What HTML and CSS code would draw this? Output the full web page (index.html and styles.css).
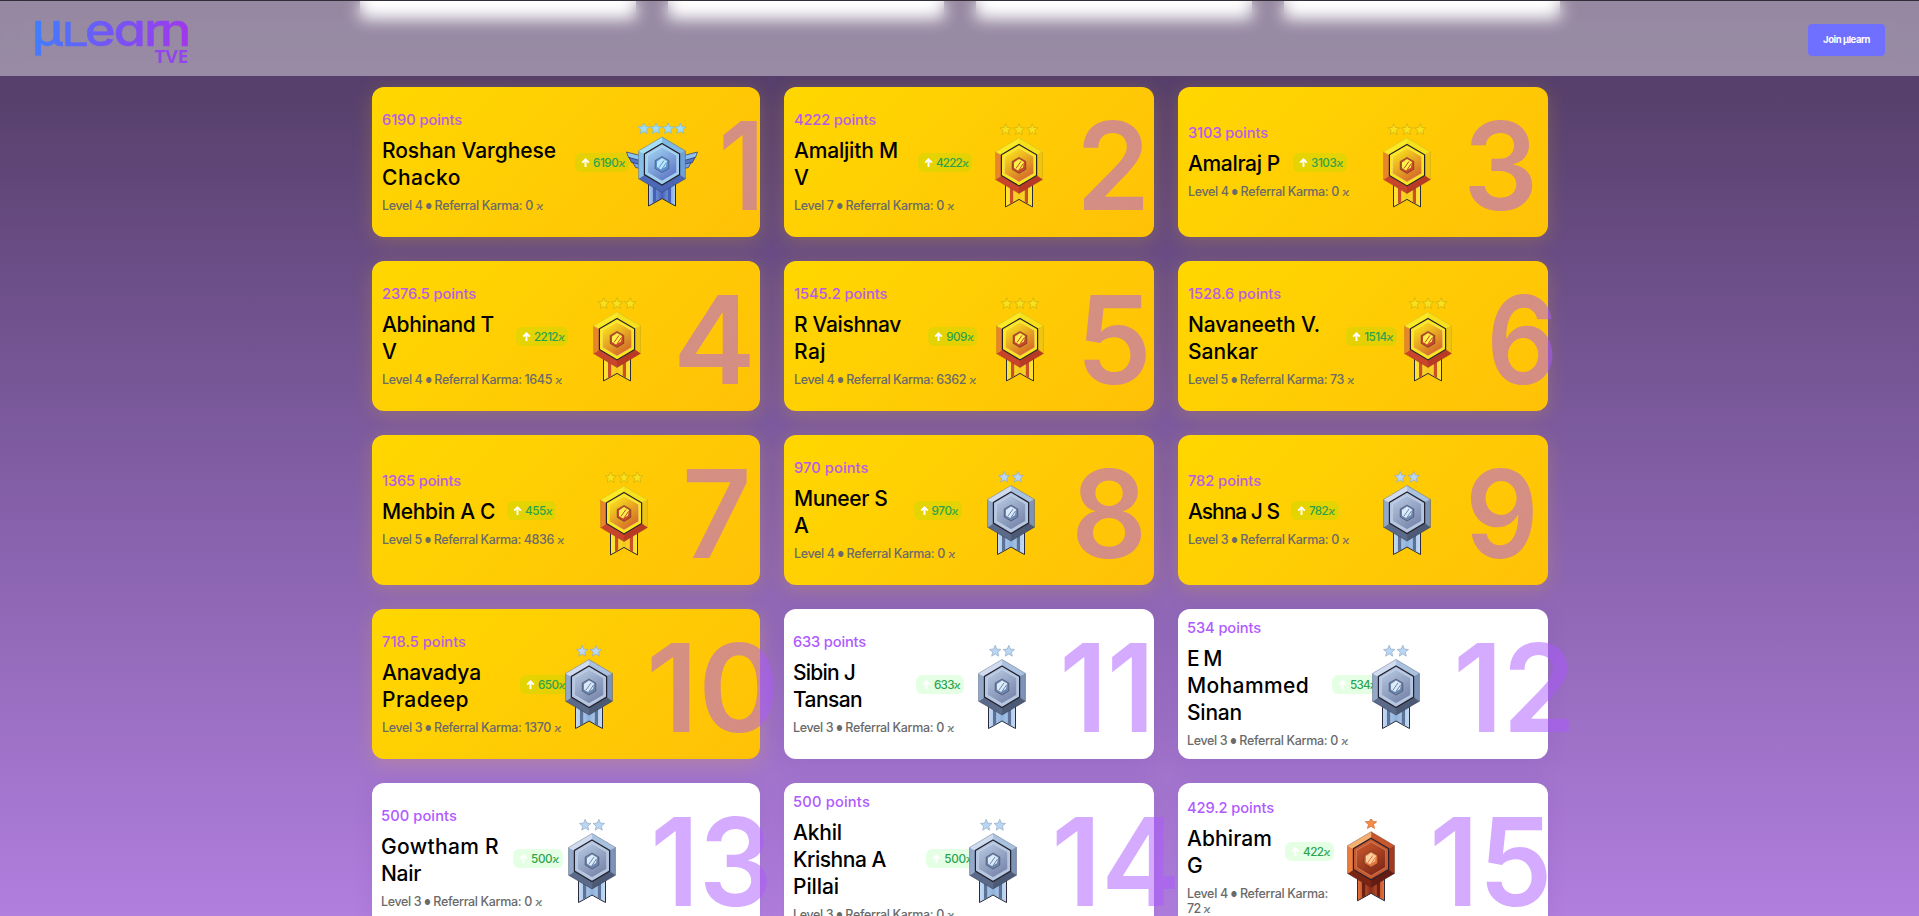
FILE: index.html
```
<!DOCTYPE html>
<html lang="en">
<head>
<meta charset="utf-8">
<title>µLearn TVE</title>
<link rel="stylesheet" href="styles.css">
</head>
<body>
<header class="nav">
  <svg class="logo" width="170" height="56" viewBox="24 14 170 56">
    <defs>
      <linearGradient id="logo" gradientUnits="userSpaceOnUse" x1="30" y1="20" x2="161" y2="50">
        <stop offset="0" stop-color="#3d80ff"/><stop offset=".45" stop-color="#6f58f6"/><stop offset="1" stop-color="#a436ea"/>
      </linearGradient>
    </defs>
    <text class="logo-word" transform="scale(1.17 1)" x="27 52 72.500 97 123 136.500" y="45.500">µʟeɑrn</text>
    <text class="logo-sub" x="154.500" y="61.500" textLength="34" lengthAdjust="spacingAndGlyphs">TVE</text>
  </svg>
  <a class="join">Join µlearn</a>
</header>
<main class="page">
  <section class="stats"><div></div><div></div><div></div><div></div></section>
  <section class="board" id="board"></section>
</main>
<script src="script.js"></script>
</body>
</html>
```
FILE: styles.css
```
* { box-sizing: border-box; }
body {
  margin: 0;
  height: 916px;
  overflow: hidden;
  font-family: Inter, "Noto Sans", "DejaVu Sans", sans-serif;
  background: linear-gradient(180deg, #503962 0%, #57406c 10%, #8560a9 55%, #b17fde 100%);
}
.nav {
  position: fixed;
  inset: 0 0 auto 0;
  z-index: 5;
  height: 76px;
  padding: 0 34px 0 24px;
  display: flex;
  align-items: center;
  justify-content: space-between;
  border-top: 1px solid #332d38;
  background: rgba(255, 255, 255, .4);
  backdrop-filter: blur(8px);
}
.logo { display: block; margin-top: 8px; overflow: visible; }
.logo-word {
  font-family: Inter, "DejaVu Sans", sans-serif;
  font-size: 45px;
  font-weight: 500;
  fill: url(#logo);
  stroke: url(#logo);
  stroke-width: .4;
  stroke-linejoin: round;
}
.logo-sub { font: 700 18px "Open Sans", sans-serif; fill: #9146ea; }
.join {
  width: 77px;
  height: 32px;
  margin-top: 2px;
  border-radius: 4px;
  background: #6f70ff;
  color: #fff;
  font-size: 9.5px;
  font-weight: 700;
  letter-spacing: -.45px;
  line-height: 32px;
  text-align: center;
}
.page { height: 916px; overflow: hidden; }
.stats {
  width: 1200px;
  margin: 0 auto;
  display: grid;
  grid-template-columns: repeat(4, 1fr);
  gap: 32px;
  height: 19px;
}
.stats div { background: #fff; }
.board {
  width: 1176px;
  margin: 68px 0 0 372px;
  display: grid;
  grid-template-columns: 388px 370px 370px;
  grid-auto-rows: 150px;
  gap: 24px;
}
.card {
  display: flex;
  align-items: center;
  border-radius: 12px;
  background: #fff;
  box-shadow: 0 4px 20px rgba(110, 60, 170, .14);
  white-space: nowrap;
  padding-left: 9px;
}
.card.gold {
  padding-left: 10px;
  background: linear-gradient(135deg, #ffd700, #ffc107);
  box-shadow: 0 4px 20px rgba(255, 193, 7, .2);
}
.card > * { flex: none; }
.info { display: flex; flex-direction: column; align-items: flex-start; }
.points { font-size: 14.7px; font-weight: 500; line-height: 19px; color: #b05aff; }
.gold .points { color: #b65bea; }
.names { margin: 7px 0 7px; display: flex; flex-direction: column; align-items: flex-start; }
.name { font-size: 21px; font-weight: 500; line-height: 27px; color: #000; }
.level { font-size: 12.5px; font-weight: 500; line-height: 15px; color: #6a6a6a; }
.dot { display: inline-block; font-size: 7px; line-height: 7px; transform: translateY(-1px); }
.k { font-family: "DejaVu Sans", sans-serif; font-size: .9em; }
.pill {
  height: 19px;
  margin-top: 1px;
  display: flex;
  align-items: center;
  gap: 3px;
  padding-left: 6px;
  border-radius: 6px;
  background: rgba(0, 255, 0, .1);
  color: #2ba34e;
  font-size: 11.7px;
  font-weight: 500;
}
.pill svg { flex: none; }
.award { margin-top: 7px; }
.medal { display: block; }
.rank {
  padding-top: 7px;
  font-size: 122px;
  font-weight: 600;
  line-height: 120px;
  color: rgba(171, 87, 255, .5);
  transform-origin: 0 50%;
}
```
FILE: script.js
```
// One row per member: points, name lines, level lines, gain, medal tier,
// then measured widths and offsets inside the card.
const members = [
  ['6190', 79, [['Roshan Varghese', 173], ['Chacko', 78]], [['Level 4 ● Referral Karma: 0', 160]], '6190', 203, 54, 'diamond', 289.7, 351.3, 385.3],
  ['4222', 81, [['Amaljith M', 103], ['V', 13]], [['Level 7 ● Referral Karma: 0', 159]], '4222', 134, 54, 'gold', 234.7, 298.7, 359],
  ['3103', 79, [['Amalraj P', 91]], [['Level 4 ● Referral Karma: 0', 160]], '3103', 115, 54, 'gold', 228.7, 290.7, 354.3],
  ['2376.5', 93, [['Abhinand T', 111], ['V', 13]], [['Level 4 ● Referral Karma: 1645', 179]], '2212', 144, 52.3, 'gold', 244.7, 306.8, 378],
  ['1545.2', 92.4, [['R Vaishnav', 106], ['Raj', 31]], [['Level 4 ● Referral Karma: 6362', 181]], '909', 144.2, 49.3, 'gold', 236.4, 300, 362],
  ['1528.6', 92, [['Navaneeth V.', 131], ['Sankar', 69]], [['Level 5 ● Referral Karma: 73', 165]], '1514', 168.2, 50.8, 'gold', 249.8, 314, 374.5],
  ['1365', 78, [['Mehbin A C', 112]], [['Level 5 ● Referral Karma: 4836', 181]], '455', 135, 49.3, 'gold', 252.3, 313.7, 375],
  ['970', 73.5, [['Muneer S', 92.5], ['A', 13.6]], [['Level 4 ● Referral Karma: 0', 160]], '970', 129.6, 48.5, 'silver', 227.3, 293, 357],
  ['782', 72, [['Ashna J S', 90]], [['Level 3 ● Referral Karma: 0', 160]], '782', 112.9, 47.7, 'silver', 228.8, 293, 355],
  ['718.5', 83, [['Anavadya', 98], ['Pradeep', 86]], [['Level 3 ● Referral Karma: 1370', 178]], '650', 148, 49, 'silver', 217.3, 279, 402.3],
  ['633', 72, [['Sibin J', 61], ['Tansan', 68]], [['Level 3 ● Referral Karma: 0', 160]], '633', 132, 48, 'silver', 218.3, 280.3, 363],
  ['534', 73, [['E M', 33.5], ['Mohammed', 121], ['Sinan', 54]], [['Level 3 ● Referral Karma: 0', 160]], '534', 154, 48, 'silver', 218.3, 279.7, 390.7],
  ['500', 75, [['Gowtham R', 117], ['Nair', 39]], [['Level 3 ● Referral Karma: 0', 160]], '500', 141, 50, 'silver', 220.3, 282.7, 395],
  ['500', 76, [['Akhil', 48], ['Krishna A', 92], ['Pillai', 45]], [['Level 3 ● Referral Karma: 0', 160]], '500', 142.3, 50, 'silver', 209.3, 271.7, 391],
  ['429.2', 86, [['Abhiram', 84], ['G', 16]], [['Level 4 ● Referral Karma:', 140], ['72', 22]], '422', 107, 49, 'bronze', 192.7, 255.7, 368.7]
];

const tiers = {
  diamond: { stars: 4, gap: 12.2, star: '#9fdcf8', edge: '#7fb4cc', f: ['#a5def5', '#7fb9e6', '#6fa0d8', '#4a66b4', '#4c69b8', '#86bfe8'], in1: '#9fd0f0', in2: '#5b74c4', gem: '#b9e6fa', gem2: '#5d8fd0', rib: ['#4560b8', '#a9d0f4'], stripe: '#4560b8', dy: -0.5 },
  gold: { stars: 3, gap: 13.3, star: '#f8e01c', edge: '#cfae10', f: ['#f9e926', '#f6e01c', '#f0c512', '#b93a24', '#c8442a', '#e8872a'], in1: '#fbe61c', in2: '#d2602a', gem: '#fdf04a', gem2: '#c9482a', rib: ['#f6c81c', '#fbe83a'], stripe: '#cc4f26', dy: 0.4 },
  silver: { stars: 2, gap: 13.6, star: '#b9d6f4', edge: '#93a9c4', f: ['#cfdcf0', '#a9c2e0', '#7d93b8', '#4c5a76', '#5a6a88', '#93a9ca'], in1: '#b4c6e0', in2: '#7482a8', gem: '#dcebfa', gem2: '#6d86ae', rib: ['#8fb2dc', '#c4dcf6'], stripe: '#5c7296', dy: 0 },
  bronze: { stars: 1, gap: 0, star: '#f58d48', edge: '#c8662e', f: ['#f5b070', '#c8552c', '#a43a20', '#641c12', '#7c2414', '#ec7c3c'], in1: '#c9582c', in2: '#7c2414', gem: '#ffd0a0', gem2: '#e2733c', rib: ['#8a2c18', '#e8743c'], stripe: '#6d2012', dy: -1.7 }
};

function hex(w, t, b) {
  const q = (b - t) / 4;
  return [[0, t], [w, t + q], [w, b - q], [0, b], [-w, b - q], [-w, t + q]];
}
const pts = a => a.map(p => p.join(',')).join(' ');

function star(cx, cy, r) {
  const a = [];
  for (let i = 0; i < 10; i++) {
    const k = i % 2 ? r * .45 : r, t = -Math.PI / 2 + i * Math.PI / 5;
    a.push([(cx + k * Math.cos(t)).toFixed(2), (cy + k * Math.sin(t)).toFixed(2)]);
  }
  return pts(a);
}

function medal(name, id) {
  const t = tiers[name];
  const out = hex(23.4, 50.5, 106), mid = hex(17.6, 57, 98.5), inn = hex(14.6, 60.5, 94.5), gem = hex(6.8, 70, 86);
  let s = `<svg class="medal" width="80" height="86" viewBox="-40 36 80 86"><defs>
    <linearGradient id="i${id}" x1=".2" y1="0" x2=".8" y2="1"><stop offset="0" stop-color="${t.in1}"/><stop offset="1" stop-color="${t.in2}"/></linearGradient>
    <linearGradient id="r${id}" x1="0" x2="1" y1="0" y2="0"><stop offset="0" stop-color="${t.rib[1]}"/><stop offset=".5" stop-color="${t.rib[0]}"/><stop offset="1" stop-color="${t.rib[1]}"/></linearGradient></defs><g transform="translate(0 ${t.dy})">`;
  for (let i = 0; i < t.stars; i++) {
    s += `<polygon points="${star((i - (t.stars - 1) / 2) * t.gap, 42.3, 6)}" fill="${t.star}" stroke="${t.edge}" stroke-width=".7"/>`;
  }
  if (name === 'diamond') {
    for (const k of [1, -1]) {
      s += `<g transform="scale(${k} 1)" stroke="#26356e" stroke-width=".7"><path d="M22 69 L35.500 65.500 L33.500 71 L22 75Z" fill="#8cc4ee"/><path d="M22 74 L33 71 L30.500 76 L22 79Z" fill="#5576c4"/><path d="M22 78 L29 76 L26.500 81 L22 82Z" fill="#7aa6e0"/></g>`;
    }
  }
  s += `<path d="M-13.500 96 V119.500 L-7 116 L0 112 L7 116 L13.500 119.500 V96Z" fill="url(#r${id})" stroke="#2c2a3a" stroke-width="1"/>
    <path d="M-9 98 V116.500 L-5.800 114.800 V98Z M9 98 V116.500 L5.800 114.800 V98Z" fill="${t.stripe}"/>`;
  for (let i = 0; i < 6; i++) {
    const j = (i + 1) % 6;
    const fill = [t.f[1], t.f[2], t.f[3], t.f[4], t.f[5], t.f[0]][i];
    s += `<polygon points="${pts([out[i], out[j], mid[j], mid[i]])}" fill="${fill}" stroke="${fill}" stroke-width=".4"/>`;
  }
  s += `<polygon points="${pts(out)}" fill="none" stroke="#24243a" stroke-opacity="${name === 'gold' ? .15 : .4}" stroke-width=".7"/>
    <polygon points="${pts(mid)}" fill="${t.in1}" stroke="#24202e" stroke-width="1.2"/>
    <polygon points="${pts(inn)}" fill="url(#i${id})" stroke="#fff" stroke-opacity=".3" stroke-width=".8"/>
    <polygon points="${pts(gem)}" fill="${t.gem2}" stroke="#24202e" stroke-opacity=".6" stroke-width=".7"/>
    <path d="M-5 75 L0 71.500 L5 74.500 L4 80 L-1 83 L-5 80.500Z" fill="${t.gem}"/>
    <path d="M-3 81 L2 74 M0 82.500 L4.500 76" stroke="${t.gem2}" stroke-width="1"/></g></svg>`;
  return s;
}

const kappa = '<span class="k">ϰ</span>';
const arrow = '<svg width="9" height="10" viewBox="0 0 9 10"><path d="M4.500 9V1.800M1.200 4.700L4.500 1.400L7.800 4.700" fill="none" stroke="#fff" stroke-width="1.900"/></svg>';

document.getElementById('board').innerHTML = members.map((m, i) => {
  const [p, pw, names, levels, gain, px, w, tier, mx, rx, rr] = m;
  const gold = i < 10, pad = gold ? 10 : 9;
  const up = levels.length > 1 ? ';transform:translateY(-7px)' : '';
  return `<article class="card${gold ? ' gold' : ''}">
    <div class="info" style="width:${px - pad}px">
      <div class="points" data-w="${pw}">${p} points</div>
      <div class="names">${names.map(n => `<div class="name" data-w="${n[1]}">${n[0]}</div>`).join('')}</div>
      ${levels.map((l, j) => `<div class="level" data-w="${l[1]}">${l[0].replace('●', '<span class="dot">●</span>')}${j === levels.length - 1 ? ' ' + kappa : ''}</div>`).join('')}
    </div>
    <div class="pill" style="width:${w}px${up}">${arrow}<span data-w="${w - 23}">${gain}${kappa}</span></div>
    <div class="award" style="margin-left:${mx - 40 - px - w}px">${medal(tier, i)}</div>
    <div class="rank" data-w="${rr - rx}" style="margin-left:${rx - mx - 40}px">${i + 1}</div>
  </article>`;
}).join('');

const ctx = document.createElement('canvas').getContext('2d');
document.querySelectorAll('[data-w]').forEach(el => {
  const target = +el.dataset.w, text = el.textContent;
  if (el.classList.contains('rank')) {
    ctx.font = '600 122px Inter';
    const b = ctx.measureText(text);
    const k = target / (b.actualBoundingBoxRight + b.actualBoundingBoxLeft);
    el.style.transform = `translateX(${b.actualBoundingBoxLeft * k}px) scaleX(${k})`;
    return;
  }
  if (text.length < 2) return;
  const r = document.createRange();
  r.selectNodeContents(el);
  el.style.letterSpacing = (target + 1 - r.getBoundingClientRect().width) / text.length + 'px';
});
```
